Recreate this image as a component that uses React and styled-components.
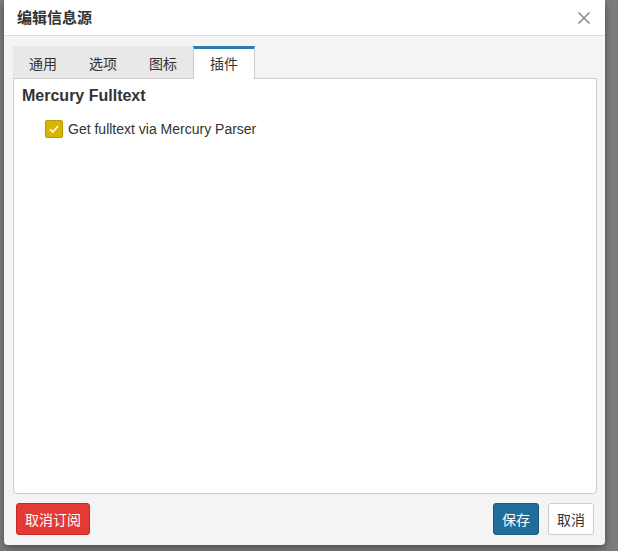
import React from "react"
import styled, { createGlobalStyle } from "styled-components"

const tabs = ["通用", "选项", "图标", "插件"]

const GlobalStyle = createGlobalStyle`
  html, body {
    margin: 0;
    padding: 0;
    background: #7d7d7d;
    height: 100%;
  }
  body {
    font-family: "Liberation Sans", Arial, "Noto Sans CJK SC", sans-serif;
    color: #333;
  }
`

const Page = styled.div`
  width: 618px;
  height: 551px;
  padding-left: 4px;
  box-sizing: border-box;
`

const Dialog = styled.div`
  width: 601px;
  height: 545px;
  background: #f4f4f4;
  display: flex;
  flex-direction: column;
  border-radius: 0 0 4px 4px;
  box-shadow: 0 3px 9px rgba(0, 0, 0, 0.4);
`

const Header = styled.div`
  height: 36px;
  flex: none;
  box-sizing: border-box;
  background: #fff;
  border-bottom: 1px solid #ddd;
  display: flex;
  align-items: center;
  justify-content: space-between;
  padding: 0 13px 3px 13px;
`

const Title = styled.h4`
  margin: 0;
  font-size: 15px;
  font-weight: bold;
  color: #333;
`

const Close = styled.button`
  border: 0;
  background: none;
  padding: 0;
  width: 16px;
  height: 16px;
  display: flex;
  cursor: pointer;
  margin-top: 3px;
`

const Body = styled.div`
  flex: 1;
  display: flex;
  flex-direction: column;
  padding: 10px 8px 0 9px;
  min-height: 0;
`

const TabBar = styled.div`
  display: flex;
  height: 32px;
  flex: none;
`

const Tab = styled.div`
  width: ${p => (p.$active ? "62px" : "60px")};
  display: flex;
  align-items: center;
  justify-content: center;
  font-size: 14px;
  box-sizing: border-box;
  color: #333;
  background: ${p => (p.$active ? "#fff" : "#e8e8e8")};
  border-top: 3px solid ${p => (p.$active ? "#2a7cae" : "#e8e8e8")};
  border-left: ${p => (p.$active ? "1px solid #ccc" : "0")};
  border-right: ${p => (p.$active ? "1px solid #ccc" : "0")};
  margin-bottom: ${p => (p.$active ? "-1px" : "0")};
  position: relative;
  padding-bottom: 2px;
`

const Panel = styled.div`
  flex: 1;
  background: #fff;
  border: 1px solid #ccc;
  border-radius: 0 0 4px 4px;
  padding: 8px 8px;
`

const Heading = styled.h3`
  margin: 0 0 15px;
  font-size: 16px;
  font-weight: bold;
  color: #333;
`

const CheckRow = styled.label`
  display: flex;
  align-items: center;
  gap: 5px;
  margin-left: 23px;
  font-size: 14px;
  color: #333;
`

const Box = styled.span`
  width: 16px;
  height: 16px;
  background: #d8b600;
  border: 1px solid #b89a00;
  border-radius: 2px;
  display: flex;
  align-items: center;
  justify-content: center;
`

const Footer = styled.div`
  height: 51px;
  flex: none;
  box-sizing: border-box;
  display: flex;
  align-items: flex-start;
  padding: 9px 11px 0 12px;
  gap: 9px;
`

const Button = styled.button`
  height: 32px;
  padding: 0 8px;
  font-family: inherit;
  font-size: 14px;
  border-radius: 3px;
  border: 1px solid ${p => p.$border};
  background: ${p => p.$bg};
  color: ${p => p.$color};
  cursor: pointer;
`

const Spacer = styled.div`
  flex: 1;
`

export default function App() {
  return (
    <>
      <GlobalStyle />
      <Page>
        <Dialog>
          <Header>
            <Title>编辑信息源</Title>
            <Close aria-label="close">
              <svg width="16" height="16" viewBox="0 0 16 16">
                <path d="M2.5 2.5 L13.5 13.5 M13.5 2.5 L2.5 13.5" stroke="#888" strokeWidth="1.5" />
              </svg>
            </Close>
          </Header>
          <Body>
            <TabBar>
              {tabs.map((t, i) => (
                <Tab key={t} $active={i === 3}>
                  {t}
                </Tab>
              ))}
            </TabBar>
            <Panel>
              <Heading>Mercury Fulltext</Heading>
              <CheckRow>
                <Box>
                  <svg width="12" height="12" viewBox="0 0 12 12">
                    <path d="M2 6.2 L4.8 9 L10 3" fill="none" stroke="#fff" strokeWidth="1.6" />
                  </svg>
                </Box>
                Get fulltext via Mercury Parser
              </CheckRow>
            </Panel>
          </Body>
          <Footer>
            <Button $bg="#e53935" $border="#c62828" $color="#fff">
              取消订阅
            </Button>
            <Spacer />
            <Button $bg="#1f6e99" $border="#195a7d" $color="#fff">
              保存
            </Button>
            <Button $bg="#fff" $border="#ccc" $color="#333">
              取消
            </Button>
          </Footer>
        </Dialog>
      </Page>
    </>
  )
}
